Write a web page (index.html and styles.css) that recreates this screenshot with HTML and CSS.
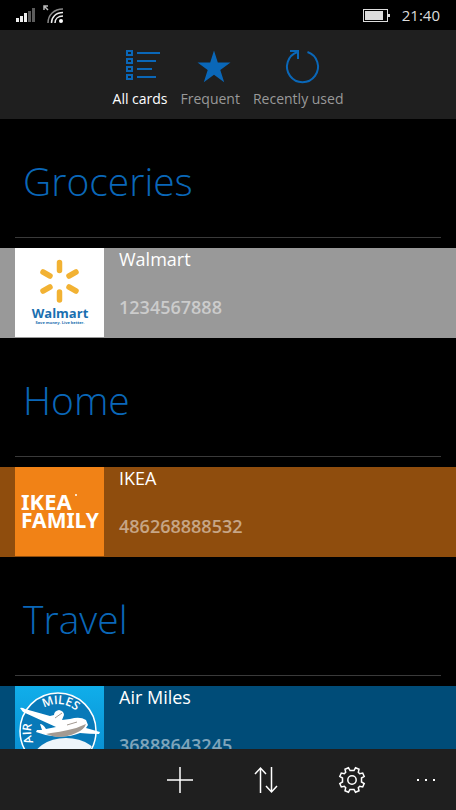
FILE: index.html
```html
<!DOCTYPE html>
<html lang="en">
<head>
  <meta charset="UTF-8" />
  <title>Loyalty Cards</title>
  <meta name="viewport" content="width=device-width, initial-scale=1" />
  <link rel="stylesheet" href="styles.css">
</head>
<body>
  <header class="status-bar">
    <svg class="signal" width="19" height="14" viewBox="0 0 19 14" fill="#eee">
      <rect x="0" y="10" width="3" height="4" />
      <rect x="4" y="8" width="3" height="6" />
      <rect x="8" y="5" width="3" height="9" />
      <rect x="12" y="3" width="3" height="11" fill="#5c5c5c" />
      <rect x="16" y="0" width="3" height="14" fill="#5c5c5c" />
    </svg>
    <svg class="wifi" width="21" height="19" viewBox="0 0 21 19" fill="none" stroke="#eee" stroke-width="1.500">
      <path d="M1 5V1h4M1 1l4 4" stroke="#bbb" />
      <path d="M5 18C5 10 11 4 20 4" stroke="#888" />
      <path d="M8.500 18C8.500 12 13 7.500 20 7.500M12 18c0-4 3-7 8-7" />
      <circle cx="18" cy="16" r="2" fill="#fff" stroke="none" />
    </svg>
    <svg class="battery" width="27" height="13" viewBox="0 0 27 13">
      <rect x=".5" y=".5" width="24" height="12" fill="none" stroke="#ddd" />
      <rect x="2" y="2" width="18" height="9" fill="#ddd" />
      <rect x="25" y="5" width="2" height="3" fill="#ddd" />
    </svg>
    <time class="clock">21:40</time>
  </header>

  <nav class="tabs">
    <button class="tab active" type="button">
      <svg width="34" height="34" viewBox="-3 0 34 34" fill="none" stroke="#0a67b8" stroke-width="2">
        <path d="M1 2h5v4H1zM1 10h5v4H1zM1 18h5v4H1zM1 26h5v4H1z" />
        <path d="M11 4h23M11 12h19M11 20h15M11 28h19" />
      </svg>
      <span>All cards</span>
    </button>
    <button class="tab" type="button">
      <svg width="34" height="34" viewBox="0 0 34 34" fill="#0a67b8">
        <path d="M21 1.500l3.800 12h12.700l-10.200 7.500 3.900 12.200-10.200-7.500-10.200 7.500 3.900-12.200-10.200-7.500h12.700z" />
      </svg>
      <span>Frequent</span>
    </button>
    <button class="tab" type="button">
      <svg width="34" height="34" viewBox="-4 0 34 34" fill="none" stroke="#0a67b8" stroke-width="2">
        <path d="M22.500 3A15.500 15.500 0 1 1 12.500 3M5 2h8v8" />
      </svg>
      <span>Recently used</span>
    </button>
  </nav>

  <main class="card-list">
    <section class="group">
      <h2>Groceries</h2>
      <a class="card grey" href="#">
        <svg class="logo" viewBox="0 0 89 89">
          <rect width="89" height="89" fill="#fff" />
          <g stroke="#f2b233" stroke-width="5.500" stroke-linecap="round">
            <path d="M44.500 14.500v8M44.500 44v8M28 24l7 4M54 39l7 4M61 24l-7 4M35 39l-7 4" />
          </g>
          <text x="45" y="70" text-anchor="middle" font-size="13" font-weight="700" fill="#1a6fb0">Walmart</text>
          <text x="45" y="76" text-anchor="middle" font-size="4" font-weight="700" fill="#1a6fb0">Save money. Live better.</text>
        </svg>
        <span class="details">
          <span class="name">Walmart</span>
          <span class="number">1234567888</span>
        </span>
      </a>
    </section>

    <section class="group">
      <h2>Home</h2>
      <a class="card orange" href="#">
        <svg class="logo" viewBox="0 0 89 89">
          <rect width="89" height="89" fill="#f18216" />
          <g class="ikea" fill="#fff" font-weight="700">
            <text x="6" y="43" font-size="22">IKEA</text>
            <text x="6" y="61" font-size="21">FAMILY</text>
          </g>
          <circle cx="61" cy="28" r="1" fill="#fff" />
        </svg>
        <span class="details">
          <span class="name">IKEA</span>
          <span class="number">486268888532</span>
        </span>
      </a>
    </section>

    <section class="group">
      <h2>Travel</h2>
      <a class="card blue" href="#">
        <svg class="logo" viewBox="0 0 89 89">
          <defs>
            <linearGradient id="sky" x1="0" y1="0" x2="0" y2="1">
              <stop offset="0" stop-color="#10aeea" />
              <stop offset="1" stop-color="#0786cc" />
            </linearGradient>
            <clipPath id="disc"><circle cx="43" cy="45" r="37" /></clipPath>
            <path id="arc" d="M43 72A27 27 0 0 1 43 18A27 27 0 0 1 43 72" />
          </defs>
          <rect width="89" height="89" fill="url(#sky)" />
          <circle cx="43" cy="45" r="38" fill="#0879b8" stroke="#fff" stroke-width="1.500" />
          <ellipse cx="51" cy="76" rx="34" ry="24" fill="#eef5fa" clip-path="url(#disc)" />
          <g font-size="12" font-weight="600" fill="#fff" text-anchor="middle">
            <text><textPath href="#arc" startOffset="40">AIR</textPath></text>
            <text><textPath href="#arc" startOffset="87">MILES</textPath></text>
          </g>
          <path d="M5 22q2-1 5 1l25 7 4-1q0-4 5-5 5 1 5 5l-2 5 8-1q10-3 16 1l2 5-2 3 14 4-1 2q-9 0-19-1-12 5-28 3-8-1-16-4l1-2h5l-2-6q3 0 6 5l10-2L8 26z" fill="#fff" />
          <path d="M36 47q9-1 17-3 10-2 18-6-2 6-10 9-8 4-19 4-6-1-11-3z" fill="#a39a92" />
          <path d="M40 32l7-5M52 39l10-3" stroke="#a39a92" />
        </svg>
        <span class="details">
          <span class="name">Air Miles</span>
          <span class="number">36888643245</span>
        </span>
      </a>
    </section>
  </main>

  <footer class="app-bar">
    <button type="button" aria-label="Add card">
      <svg width="28" height="28" viewBox="0 0 28 28"><path d="M14 1v26M1 14h26" /></svg>
    </button>
    <button type="button" aria-label="Sort">
      <svg width="28" height="28" viewBox="0 0 28 28"><path d="M8.500 27V2M3 8l5.500-6L14 8M19.500 1v25M14 20l5.500 6 5.500-6" /></svg>
    </button>
    <button type="button" aria-label="Settings">
      <svg width="28" height="28" viewBox="0 0 28 28">
        <path d="M12 4.500L10.500 1.800 7 3.300l.7 3-1.400 1.400-3-.7L1.800 10.500 4.500 12v4l-2.700 1.500L3.300 21l3-.7 1.400 1.400-.7 3 3.500 1.500L12 23.500h4l1.500 2.700L21 24.700l-.7-3 1.400-1.400 3 .7 1.500-3.500L23.500 16v-4l2.700-1.500L24.700 7l-3 .7-1.400-1.400.7-3-3.500-1.500L16 4.500z" />
        <circle cx="14" cy="14" r="4.200" />
      </svg>
    </button>
    <button class="more" type="button" aria-label="More">
      <svg width="20" height="28" viewBox="0 0 20 28"><path d="M1 14h2M9 14h2M17 14h2" stroke-width="2" /></svg>
    </button>
  </footer>
</body>
</html>
```
FILE: styles.css
```css
* {
  box-sizing: border-box;
}

body {
  background: #000;
  color: #fff;
  font-family: "Open Sans", "Noto Sans", sans-serif;
  margin: 0;
  height: 100vh;
  display: flex;
  flex-direction: column;
}

button {
  background: none;
  border: none;
  padding: 0;
  color: inherit;
  font-family: inherit;
  cursor: pointer;
}

/* Status bar */
.status-bar {
  flex: none;
  height: 30px;
  padding: 0 16px;
  display: flex;
  align-items: center;
}

.wifi {
  margin-left: 8px;
  margin-bottom: 2px;
}

.battery {
  margin-left: auto;
}

.clock {
  margin-left: 12px;
  font-size: 15px;
  color: #ddd;
}

/* Tabs */
.tabs {
  flex: none;
  height: 89px;
  padding-top: 19px;
  background: #1f1f1f;
  display: flex;
  justify-content: center;
  align-items: flex-start;
  gap: 13px;
}

.tab {
  display: flex;
  flex-direction: column;
  align-items: center;
  gap: 6px;
  font-size: 14px;
  line-height: 20px;
  color: #999;
}

.tab svg {
  overflow: visible;
}

.tab.active {
  color: #fff;
}

/* Card list */
.card-list {
  flex: 1;
  min-height: 0;
  overflow-y: auto;
  scrollbar-width: none;
}

.group h2 {
  height: 119px;
  margin: 0 15px 10px;
  padding: 34px 8px 0;
  border-bottom: 1px solid #3a3a3a;
  font-size: 39px;
  font-weight: 300;
  line-height: 56px;
  color: #0a67b8;
}

.card {
  height: 90px;
  padding-left: 15px;
  display: flex;
  gap: 15px;
  color: #fff;
  text-decoration: none;
}

.card.grey {
  background: #999;
}

.card.orange {
  background: #8f4d0d;
}

.card.blue {
  background: #004c78;
}

.logo {
  flex: none;
  width: 89px;
  height: 89px;
}

.ikea {
  font-family: "Noto Sans", sans-serif;
}

.details {
  display: flex;
  flex-direction: column;
  gap: 26px;
  font-size: 18px;
  line-height: 22px;
}

.number {
  font-weight: 600;
  color: rgba(255, 255, 255, 0.5);
}

/* App bar */
.app-bar {
  flex: none;
  height: 61px;
  background: #1f1f1f;
  display: flex;
  justify-content: flex-end;
}

.app-bar button {
  width: 86px;
  display: flex;
  justify-content: center;
  align-items: center;
}

.app-bar .more {
  width: 61px;
}

.app-bar svg {
  fill: none;
  stroke: #fff;
  stroke-width: 1.5;
}
```
